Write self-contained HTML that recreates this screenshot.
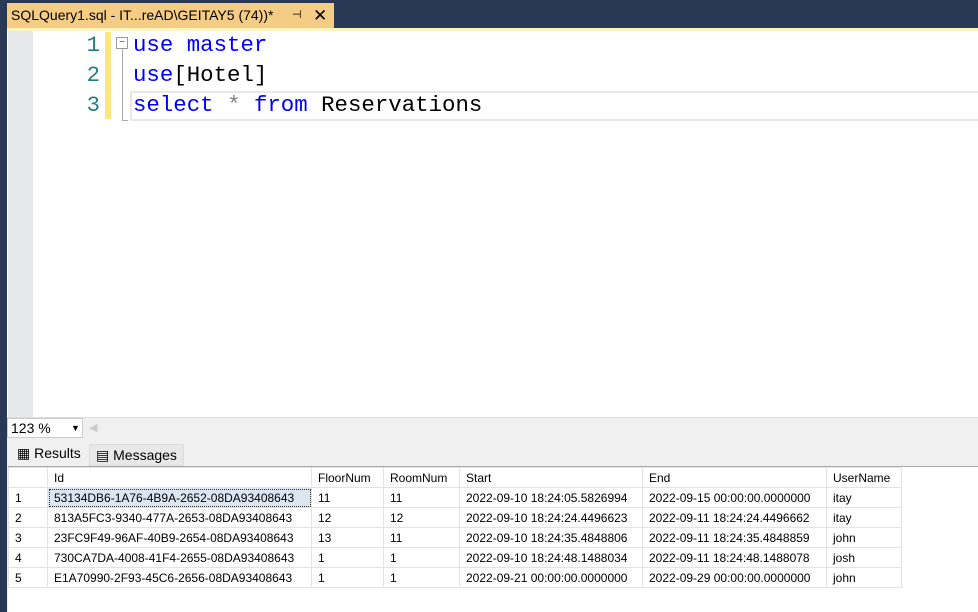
<!DOCTYPE html>
<html><head><style>
body{margin:0;width:978px;height:612px;overflow:hidden;background:#fff;position:relative;font-family:"Liberation Sans",sans-serif}
div{position:absolute;box-sizing:border-box}
.code{font-family:"Liberation Mono",monospace;font-size:22.4px;white-space:pre;line-height:30px}
.kw{color:#0000ff}
.ln{color:#237d7d;font-family:"Liberation Mono",monospace;font-size:22.3px;width:50px;text-align:right;left:50px}
table{border-collapse:collapse;table-layout:fixed;width:893px;font-size:12px;position:absolute;left:8px;top:467px}
td{height:20px;padding:0 0 0 6px;border:1px solid #e3e3e3;white-space:nowrap;overflow:hidden;color:#000;box-sizing:border-box;line-height:18px}
</style></head><body>
<div style="left:0;top:0;width:978px;height:28px;background:#293955"></div>
<div style="left:0;top:0;width:7px;height:612px;background:#293955"></div>
<div style="left:7px;top:3px;width:327px;height:25px;background:#f5cc84;font-size:14px;line-height:25px;padding-left:4px;color:#000">SQLQuery1.sql - IT...reAD\GEITAY5 (74))*<span style="position:absolute;left:285px;font-size:11px">⊣</span><span style="position:absolute;left:306px;font-size:17px">✕</span></div>
<div style="left:7px;top:28px;width:971px;height:3px;background:#fdf4bf"></div>
<div style="left:8px;top:31px;width:25px;height:387px;background:#e6e7e8"></div>
<div style="left:105px;top:32px;width:6px;height:87px;background:#fce77c"></div>
<div class="ln" style="top:30px;line-height:30px">1<br>2<br>3</div>
<div style="left:116px;top:37px;width:12px;height:12px;border:1px solid #999;background:#fff;font-size:10px;line-height:9px;text-align:center;color:#444">−</div>
<div style="left:122px;top:49px;width:1px;height:72px;background:#aaa"></div>
<div style="left:122px;top:120px;width:6px;height:1px;background:#aaa"></div>
<div style="left:130px;top:91px;width:848px;height:30px;border:2px solid #e8e8e8;border-right:none"></div>
<div class="code" style="left:133px;top:30px"><span class="kw">use master</span>
<span class="kw">use</span>[Hotel]
<span class="kw">select</span> <span style="color:#808080">*</span> <span class="kw">from</span> Reservations</div>
<div style="left:7px;top:417px;width:971px;height:22px;background:#f0f0f0;border-top:1px solid #ddd"></div>
<div style="left:7px;top:418px;width:76px;height:20px;background:#fff;border:1px solid #ccc;font-size:14px;line-height:18px;padding-left:3px">123 %<span style="position:absolute;left:63px;font-size:9px">▼</span></div>
<div style="left:89px;top:421px;font-size:11px;color:#ccc">◀</div>
<div style="left:7px;top:439px;width:971px;height:173px;background:#f0f0f0"></div>
<div style="left:10px;top:443px;width:78px;height:23px;background:#f0f0f0;font-size:14px;line-height:21px;padding-left:7px">▦ Results</div>
<div style="left:89px;top:444px;width:95px;height:22px;background:#e8e8e8;border:1px solid #ddd;font-size:14px;line-height:21px;padding-left:6px">▤ Messages</div>
<div style="left:8px;top:466px;width:970px;height:146px;background:#fff;border-top:1px solid #aaa"></div>
<table>
<colgroup><col style="width:39px"><col style="width:264px"><col style="width:72px"><col style="width:76px"><col style="width:183px"><col style="width:184px"><col style="width:75px"></colgroup>
<tr><td></td><td>Id</td><td>FloorNum</td><td>RoomNum</td><td>Start</td><td>End</td><td>UserName</td></tr>
<tr><td>1</td><td style="background:#dde6f0;outline:1px dotted #333;outline-offset:-2px">53134DB6-1A76-4B9A-2652-08DA93408643</td><td>11</td><td>11</td><td>2022-09-10 18:24:05.5826994</td><td>2022-09-15 00:00:00.0000000</td><td>itay</td></tr>
<tr><td>2</td><td>813A5FC3-9340-477A-2653-08DA93408643</td><td>12</td><td>12</td><td>2022-09-10 18:24:24.4496623</td><td>2022-09-11 18:24:24.4496662</td><td>itay</td></tr>
<tr><td>3</td><td>23FC9F49-96AF-40B9-2654-08DA93408643</td><td>13</td><td>11</td><td>2022-09-10 18:24:35.4848806</td><td>2022-09-11 18:24:35.4848859</td><td>john</td></tr>
<tr><td>4</td><td>730CA7DA-4008-41F4-2655-08DA93408643</td><td>1</td><td>1</td><td>2022-09-10 18:24:48.1488034</td><td>2022-09-11 18:24:48.1488078</td><td>josh</td></tr>
<tr><td>5</td><td>E1A70990-2F93-45C6-2656-08DA93408643</td><td>1</td><td>1</td><td>2022-09-21 00:00:00.0000000</td><td>2022-09-29 00:00:00.0000000</td><td>john</td></tr>
</table>
</body></html>
